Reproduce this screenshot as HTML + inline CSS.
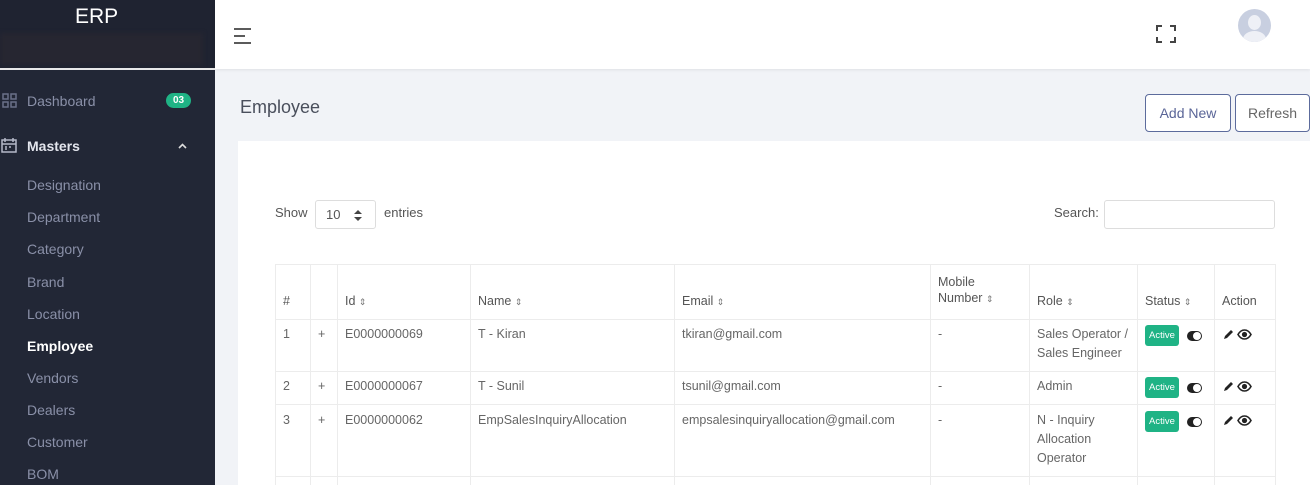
<!DOCTYPE html>
<html style="width:1310px;height:485px;overflow:hidden"><head><style>
*{box-sizing:border-box;margin:0;padding:0}
body{width:1310px;height:485px;overflow:hidden;background:#f1f3f7;font-family:"Liberation Sans",sans-serif;position:relative}
.sb{position:absolute;left:0;top:0;width:215px;height:485px;background:#222736}
.logo{position:absolute;left:0;top:0;width:215px;height:68px;background:#1f2331}
.logo .t{position:absolute;left:75px;top:5px;color:#fff;font-size:21px}
.logo .blur{position:absolute;left:0;top:33px;width:203px;height:32px;background:#262631;filter:blur(2px)}
.line{position:absolute;left:0;top:68px;width:215px;height:2px;background:#e8e8e8}
.nav{position:absolute;color:#8a90a8;font-size:14px}
.hdr{position:absolute;left:215px;top:0;width:1095px;height:69px;background:#fff;box-shadow:0 1px 3px rgba(0,0,0,.08)}
.card{position:absolute;left:238px;top:141px;width:1072px;height:344px;background:#fff}
.tw{position:absolute;left:0;top:0;width:1310px;height:485px;overflow:hidden}
table{position:absolute;left:275px;top:264px;border-collapse:collapse;font-size:12.5px;color:#666}
td{border:1px solid #ececec;padding:0 7px;vertical-align:top}
.h td{vertical-align:bottom;padding-bottom:11px;color:#555;font-size:12.5px}
.bt{position:absolute;top:94px;height:38px;border:1px solid #5c6b9c;border-radius:4px;font-size:14px;color:#5a6597;text-align:center;line-height:36px;background:#fff}
.act{display:inline-block;background:#1fb385;color:#fff;font-size:9.5px;padding:1px 4px;border-radius:3px;vertical-align:middle}
.tg{display:inline-block;width:15px;height:10px;border-radius:5px;background:#222;margin-left:8px;vertical-align:middle;position:relative}
.tg:after{content:"";position:absolute;right:1px;top:1px;width:8px;height:8px;border-radius:50%;background:#fff}
.s{font-size:9px;color:#777}
.ic{display:inline-block;vertical-align:middle}
</style></head><body>
<div class="sb">
 <div class="logo"><div class="blur"></div><div class="t">ERP</div></div>
 <div class="line"></div>
 <svg style="position:absolute;left:2px;top:93px" width="15" height="15" fill="none" stroke="#6a7088" stroke-width="1.5"><rect x="1" y="1" width="5" height="5"/><rect x="9" y="1" width="5" height="5"/><rect x="1" y="9" width="5" height="5"/><rect x="9" y="9" width="5" height="5"/></svg>
 <div class="nav" style="left:27px;top:93px">Dashboard</div>
 <div style="position:absolute;left:166px;top:93px;width:25px;height:15px;border-radius:8px;background:#1fb385;color:#fff;font-size:10px;font-weight:bold;text-align:center;line-height:15px">03</div>
 <svg style="position:absolute;left:1px;top:137px" width="16" height="16" fill="none" stroke="#b5b9c8" stroke-width="1.5"><rect x="1" y="3" width="14" height="12"/><path d="M1 7h14M4 1v4M12 1v4M4 10h2M8 10h2M4 12h2"/></svg>
 <div class="nav" style="left:27px;top:138px;color:#e4e6ee;font-weight:bold">Masters</div>
 <svg style="position:absolute;left:178px;top:143px" width="9" height="6" fill="none" stroke="#ddd" stroke-width="1.6"><path d="M1 5l3.5-3.5L8 5"/></svg>
 <div class="nav" style="left:27px;top:177px">Designation</div>
 <div class="nav" style="left:27px;top:209px">Department</div>
 <div class="nav" style="left:27px;top:241px">Category</div>
 <div class="nav" style="left:27px;top:274px">Brand</div>
 <div class="nav" style="left:27px;top:306px">Location</div>
 <div class="nav" style="left:27px;top:338px;color:#fff;font-weight:bold">Employee</div>
 <div class="nav" style="left:27px;top:370px">Vendors</div>
 <div class="nav" style="left:27px;top:402px">Dealers</div>
 <div class="nav" style="left:27px;top:434px">Customer</div>
 <div class="nav" style="left:27px;top:466px">BOM</div>
</div>
<div class="hdr">
 <svg style="position:absolute;left:18px;top:27px" width="20" height="18" stroke="#444" stroke-width="1.8"><path d="M1 2h17M1 9h11M1 16h17"/></svg>
 <svg style="position:absolute;left:941px;top:25px" width="20" height="18" fill="none" stroke="#444" stroke-width="2"><path d="M1 6V1h5M14 1h5v5M19 12v5h-5M6 17H1v-5"/></svg>
 <div style="position:absolute;left:1023px;top:9px;width:33px;height:33px;border-radius:50%;background:#c8cfe0;overflow:hidden"><div style="position:absolute;left:10px;top:6px;width:13px;height:15px;border-radius:50%;background:#eef0f6"></div><div style="position:absolute;left:5px;top:22px;width:23px;height:16px;border-radius:50%;background:#eef0f6"></div></div>
</div>
<div style="position:absolute;left:240px;top:97px;font-size:18px;color:#4a4f5c">Employee</div>
<div class="bt" style="left:1145px;width:86px">Add New</div>
<div class="bt" style="left:1235px;width:75px;color:#666">Refresh</div>
<div class="card"></div>
<div style="position:absolute;left:275px;top:205px;font-size:13px;color:#555">Show</div>
<div style="position:absolute;left:315px;top:200px;width:61px;height:29px;border:1px solid #ddd;border-radius:3px;font-size:13px;color:#555;padding:6px 0 0 10px">10 <svg style="position:absolute;left:38px;top:9px" width="8" height="11" fill="#444"><path d="M4 0L8 4H0zM4 11L0 7h8z"/></svg></div>
<div style="position:absolute;left:384px;top:205px;font-size:13px;color:#555">entries</div>
<div style="position:absolute;left:1054px;top:205px;font-size:13px;color:#555">Search:</div>
<div style="position:absolute;left:1104px;top:200px;width:171px;height:29px;border:1px solid #ddd;border-radius:3px"></div>
<div class="tw">
<table>
<colgroup><col style="width:35px"><col style="width:27px"><col style="width:133px"><col style="width:204px"><col style="width:256px"><col style="width:99px"><col style="width:108px"><col style="width:77px"><col style="width:61px"></colgroup>
<tr class="h" style="height:55px"><td>#</td><td></td><td>Id <span class="s">&#8661;</span></td><td>Name <span class="s">&#8661;</span></td><td>Email <span class="s">&#8661;</span></td><td>Mobile<br><span style="line-height:19px">Number</span> <span class="s">&#8661;</span></td><td>Role <span class="s">&#8661;</span></td><td>Status <span class="s">&#8661;</span></td><td>Action</td></tr>
<tr style="height:52px;line-height:19px"><td style="padding-top:5px">1</td><td style="padding-top:5px">+</td><td style="padding-top:5px">E0000000069</td><td style="padding-top:5px">T - Kiran</td><td style="padding-top:5px">tkiran@gmail.com</td><td style="padding-top:5px">-</td><td style="padding-top:5px">Sales Operator /<br>Sales Engineer</td><td style="padding-top:5px"><span class="act">Active</span><span class="tg"></span></td><td style="padding-top:5px"><svg class="ic" width="12" height="12"><path d="M2 10l1-3 6-6 2 2-6 6z" fill="#222"/></svg> <svg class="ic" width="15" height="11" fill="none" stroke="#222" stroke-width="1.6"><path d="M1 5.5C3 2 5 1 7.5 1S12 2 14 5.5C12 9 10 10 7.5 10S3 9 1 5.5z"/><circle cx="7.5" cy="5.5" r="1.8" fill="#222"/></svg></td></tr>
<tr style="height:33px;line-height:19px"><td style="padding-top:5px">2</td><td style="padding-top:5px">+</td><td style="padding-top:5px">E0000000067</td><td style="padding-top:5px">T - Sunil</td><td style="padding-top:5px">tsunil@gmail.com</td><td style="padding-top:5px">-</td><td style="padding-top:5px">Admin</td><td style="padding-top:5px"><span class="act">Active</span><span class="tg"></span></td><td style="padding-top:5px"><svg class="ic" width="12" height="12"><path d="M2 10l1-3 6-6 2 2-6 6z" fill="#222"/></svg> <svg class="ic" width="15" height="11" fill="none" stroke="#222" stroke-width="1.6"><path d="M1 5.5C3 2 5 1 7.5 1S12 2 14 5.5C12 9 10 10 7.5 10S3 9 1 5.5z"/><circle cx="7.5" cy="5.5" r="1.8" fill="#222"/></svg></td></tr>
<tr style="height:72px;line-height:19px"><td style="padding-top:6px">3</td><td style="padding-top:6px">+</td><td style="padding-top:6px">E0000000062</td><td style="padding-top:6px">EmpSalesInquiryAllocation</td><td style="padding-top:6px">empsalesinquiryallocation@gmail.com</td><td style="padding-top:6px">-</td><td style="padding-top:6px">N - Inquiry<br>Allocation<br>Operator</td><td style="padding-top:6px"><span class="act">Active</span><span class="tg"></span></td><td style="padding-top:6px"><svg class="ic" width="12" height="12"><path d="M2 10l1-3 6-6 2 2-6 6z" fill="#222"/></svg> <svg class="ic" width="15" height="11" fill="none" stroke="#222" stroke-width="1.6"><path d="M1 5.5C3 2 5 1 7.5 1S12 2 14 5.5C12 9 10 10 7.5 10S3 9 1 5.5z"/><circle cx="7.5" cy="5.5" r="1.8" fill="#222"/></svg></td></tr>
<tr style="height:30px"><td></td><td></td><td></td><td></td><td></td><td></td><td></td><td></td><td></td></tr>
</table>
</div>
</body></html>
